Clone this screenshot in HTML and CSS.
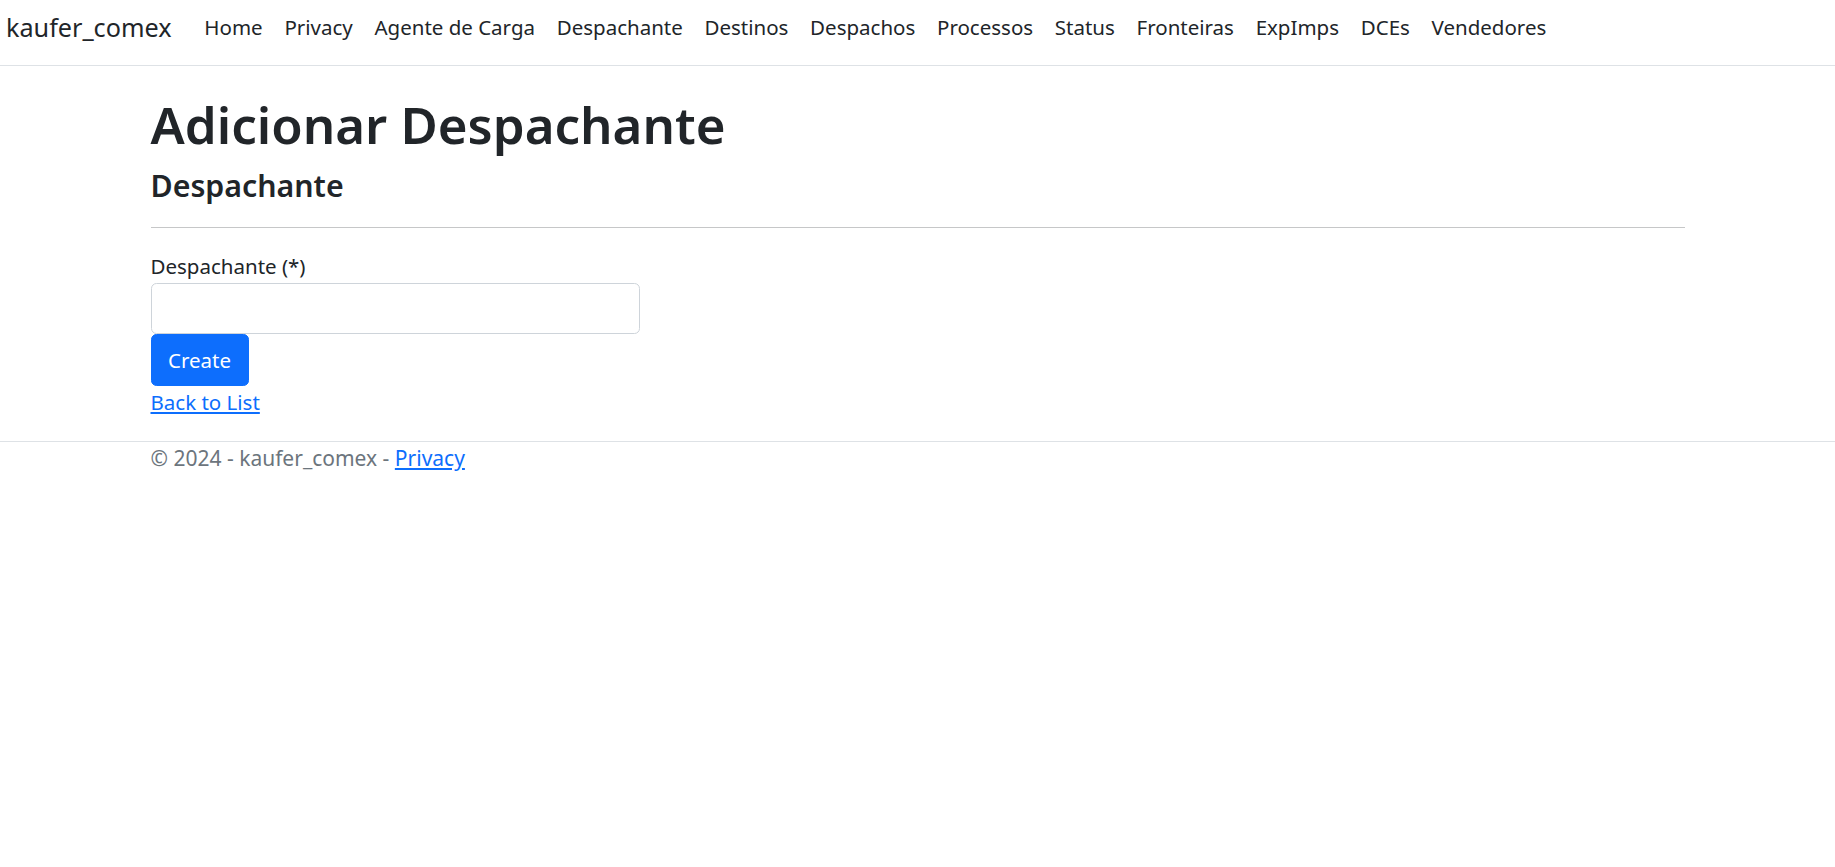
FILE: index.html
```html
<!DOCTYPE html>
<html lang="pt">
<head>
<meta charset="utf-8">
<title>Adicionar Despachante - kaufer_comex</title>
<link rel="stylesheet" href="styles.css">
</head>
<body>
<header class="navbar">
  <a class="brand" href="#">kaufer_comex</a>
  <nav class="nav">
    <a class="nav-link" href="#">Home</a>
    <a class="nav-link" href="#">Privacy</a>
    <a class="nav-link" href="#">Agente de Carga</a>
    <a class="nav-link" href="#">Despachante</a>
    <a class="nav-link" href="#">Destinos</a>
    <a class="nav-link" href="#">Despachos</a>
    <a class="nav-link" href="#">Processos</a>
    <a class="nav-link" href="#">Status</a>
    <a class="nav-link" href="#">Fronteiras</a>
    <a class="nav-link" href="#">ExpImps</a>
    <a class="nav-link" href="#">DCEs</a>
    <a class="nav-link" href="#">Vendedores</a>
  </nav>
</header>
<main class="container">
  <h1 class="title">Adicionar Despachante</h1>
  <h4 class="subtitle">Despachante</h4>
  <hr class="divider">
  <form class="form">
    <div class="field">
      <label class="label" for="nome">Despachante (*)</label>
      <input class="input" id="nome" type="text">
    </div>
    <button class="btn" type="button">Create</button>
  </form>
  <div class="back"><a class="link" href="#">Back to List</a></div>
</main>
<footer class="footer">
  <div class="container footer-inner">&copy; 2024 - kaufer_comex - <a class="link" href="#">Privacy</a></div>
</footer>
</body>
</html>
```

FILE: styles.css
```css
html, body {
  margin: 0;
  padding: 0;
}
body {
  font-family: "Noto Sans", "Open Sans", sans-serif;
  font-size: 20.5px;
  color: #212529;
  background: #fff;
}
.navbar {
  height: 54px;
  padding: 11px 6px 0;
  border-bottom: 1px solid #dee2e6;
  display: flex;
  align-items: flex-start;
}
.brand {
  font-size: 25.2px;
  line-height: 33px;
  color: #212529;
  text-decoration: none;
  margin-right: 22px;
}
.nav {
  display: flex;
}
.nav-link {
  color: #212529;
  text-decoration: none;
  line-height: 33px;
  padding: 0 10.85px;
}
.container {
  max-width: 1534px;
  margin: 0 auto;
  padding: 0 16.5px;
}
.title {
  font-size: 51px;
  font-weight: 600;
  line-height: 66px;
  margin: 25px 0 10px;
}
.subtitle {
  font-size: 30.3px;
  font-weight: 600;
  line-height: 37px;
  margin: 0;
}
.divider {
  border: 0;
  border-top: 1px solid #c6c7c8;
  margin: 23px 0 22px;
}
.form {
  margin: 0;
}
.label {
  display: block;
  line-height: 33px;
}
.input {
  display: block;
  box-sizing: border-box;
  width: 489px;
  height: 51px;
  border: 1px solid #ced4da;
  border-radius: 5.5px;
  font: inherit;
  padding: 0 16px;
  margin: 0;
}
.btn {
  display: block;
  box-sizing: border-box;
  height: 52px;
  width: 98px;
  background: #0d6efd;
  color: #fff;
  border: 1px solid #0d6efd;
  border-radius: 5.5px;
  font: inherit;
  padding: 0;
  margin: 0;
}
.back {
  line-height: 33px;
  padding-bottom: 22px;
}
.link {
  color: #0d6efd;
}
.footer {
  border-top: 1px solid #dee2e6;
  color: #6c757d;
}
.footer-inner {
  font-size: 21px;
  line-height: 33px;
}
```
